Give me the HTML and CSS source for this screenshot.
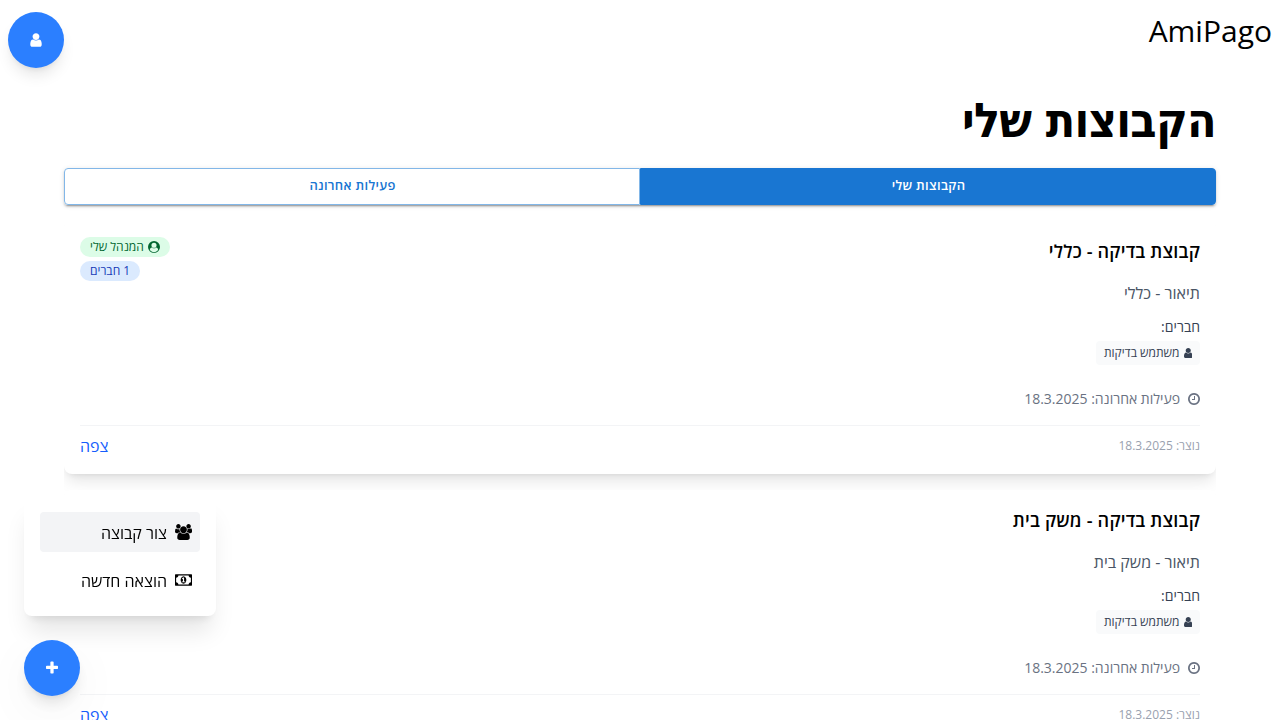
FILE: index.html
```html
<!DOCTYPE html>
<html lang="he" dir="rtl">
<head>
<meta charset="utf-8">
<title>AmiPago</title>
<link rel="stylesheet" href="styles.css">
</head>
<body>
<svg class="sprite" aria-hidden="true">
  <symbol id="user" viewBox="0 0 1280 1792"><path transform="translate(-256 0)" d="M1536 1399q0 109-62.5 187t-150.5 78h-854q-88 0-150.5-78t-62.5-187q0-85 8.5-160.5t31.5-152 58.5-131 94-89 134.5-34.5q131 128 313 128t313-128q76 0 134.5 34.5t94 89 58.5 131 31.5 152 8.5 160.5zm-256-887q0 159-112.5 271.5t-271.5 112.5-271.5-112.5-112.5-271.5 112.5-271.5 271.5-112.5 271.5 112.5 112.5 271.5z"/></symbol>
  <symbol id="users" viewBox="64 0 1920 1792"><path d="M657 896q-162 5-265 128h-134q-82 0-138-40.5t-56-118.5q0-353 124-353 6 0 43.5 21t97.5 42.5 119 21.5q67 0 133-23-5 37-5 66 0 159 90 296zm1071 637q0 120-73 189.5t-194 69.5h-874q-121 0-194-69.5t-73-189.5q0-53 3.5-103.5t14-109 26.5-108.5 43-97.5 62-81 85.5-53.5 111.5-20q10 0 43 21.5t73 48 107 48 135 21.5 135-21.5 107-48 73-48 43-21.5q61 0 111.5 20t85.5 53.5 62 81 43 97.5 26.5 108.5 14 109 3.5 103.5zm-1024-1277q0 106-75 181t-181 75-181-75-75-181 75-181 181-75 181 75 75 181zm704 384q0 159-112.5 271.5t-271.5 112.5-271.5-112.5-112.5-271.5 112.5-271.5 271.5-112.5 271.5 112.5 112.5 271.5zm576 225q0 78-56 118.5t-138 40.5h-134q-103-123-265-128 90-137 90-296 0-29-5-66 66 23 133 23 59 0 119-21.5t97.5-42.5 43.5-21q124 0 124 353zm-128-609q0 106-75 181t-181 75-181-75-75-181 75-181 181-75 181 75 75 181z"/></symbol>
  <symbol id="clock" viewBox="128 0 1536 1792"><path d="M1024 544v448q0 14-9 23t-23 9h-320q-14 0-23-9t-9-23v-64q0-14 9-23t23-9h224v-352q0-14 9-23t23-9h64q14 0 23 9t9 23zm416 352q0-148-73-273t-198-198-273-73-273 73-198 198-73 273 73 273 198 198 273 73 273-73 198-198 73-273zm224 0q0 209-103 385.5t-279.5 279.5-385.5 103-385.5-103-279.5-279.5-103-385.5 103-385.5 279.5-279.5 385.5-103 385.5 103 279.5 279.5 103 385.5z"/></symbol>
  <symbol id="money" viewBox="0 0 1920 1792"><path d="M768 1152h384v-96h-128v-448h-114l-148 137 77 80q42-37 55-57h2v288h-128v96zm512-256q0 70-21 142t-59.5 134-101.5 101-138 39-138-39-101.5-101-59.5-134-21-142 21-142 59.5-134 101.5-101 138-39 138 39 101.5 101 59.5 134 21 142zm512 256v-512q-106 0-181-75t-75-181h-1152q0 106-75 181t-181 75v512q106 0 181 75t75 181h1152q0-106 75-181t181-75zm128-832v1152q0 26-19 45t-45 19h-1792q-26 0-45-19t-19-45v-1152q0-26 19-45t45-19h1792q26 0 45 19t19 45z"/></symbol>
  <symbol id="plus" viewBox="192 0 1408 1792"><path d="M1600 736v192q0 40-28 68t-68 28h-416v416q0 40-28 68t-68 28h-192q-40 0-68-28t-28-68v-416h-416q-40 0-68-28t-28-68v-192q0-40 28-68t68-28h416v-416q0-40 28-68t68-28h192q40 0 68 28t28 68v416h416q40 0 68 28t28 68z"/></symbol>
  <symbol id="circle-user" viewBox="0 0 1792 1792"><path fill-rule="evenodd" d="M896 0a896 896 0 1 1 0 1792a896 896 0 1 1 0-1792zM1515 1351C1490 1135 1406 960 1211 960Q1085 1088 896 1088T581 960C386 960 302 1135 277 1351C413 1545 640 1664 896 1664S1379 1545 1515 1351zM896 256a384 384 0 1 0 0 768a384 384 0 1 0 0-768z"/></symbol>
</svg>

<header class="topbar">
  <div class="brand">AmiPago</div>
  <button class="fab"><svg class="icon icon-user"><use href="#user"/></svg></button>
</header>

<main class="content">
  <h1 class="page-title">הקבוצות שלי</h1>
  <div class="tabs">
    <button class="tab tab-active">הקבוצות שלי</button>
    <button class="tab">פעילות אחרונה</button>
  </div>

  <div class="groups">
    <article class="card">
      <div class="card-head">
        <h2 class="card-title">קבוצת בדיקה - כללי</h2>
        <div class="badges">
          <span class="badge badge-green"><svg class="icon icon-circle"><use href="#circle-user"/></svg>המנהל שלי</span>
          <span class="badge badge-blue">1 חברים</span>
        </div>
      </div>
      <p class="description">תיאור - כללי</p>
      <div class="members-label">חברים:</div>
      <div class="member"><svg class="icon icon-member"><use href="#user"/></svg>משתמש בדיקות</div>
      <div class="activity"><svg class="icon icon-clock"><use href="#clock"/></svg>פעילות אחרונה: 18.3.2025</div>
      <div class="card-foot"><span class="created">נוצר: 18.3.2025</span><a class="view">צפה</a></div>
    </article>

    <article class="card">
      <div class="card-head">
        <h2 class="card-title">קבוצת בדיקה - משק בית</h2>
      </div>
      <p class="description">תיאור - משק בית</p>
      <div class="members-label">חברים:</div>
      <div class="member"><svg class="icon icon-member"><use href="#user"/></svg>משתמש בדיקות</div>
      <div class="activity"><svg class="icon icon-clock"><use href="#clock"/></svg>פעילות אחרונה: 18.3.2025</div>
      <div class="card-foot"><span class="created">נוצר: 18.3.2025</span><a class="view">צפה</a></div>
    </article>
  </div>
</main>

<nav class="speed-dial">
  <div class="menu">
    <a class="menu-item menu-item-active"><svg class="icon icon-menu"><use href="#users"/></svg><span>צור קבוצה</span></a>
    <a class="menu-item"><svg class="icon icon-menu"><use href="#money"/></svg><span>הוצאה חדשה</span></a>
  </div>
  <button class="fab fab-add"><svg class="icon icon-plus"><use href="#plus"/></svg></button>
</nav>
</body>
</html>
```
FILE: styles.css
```css
* { box-sizing: border-box; margin: 0; padding: 0; }
html, body { height: 720px; overflow: hidden; }
body { background: #fff; color: #000; font-family: "Open Sans", sans-serif; font-size: 16px; line-height: 24px; }
button { border: 0; font: inherit; }
.sprite { position: absolute; width: 0; height: 0; }
.icon { display: block; flex: none; fill: currentColor; }
.icon-user { width: 12px; height: 16px; }
.icon-plus { width: 12px; height: 16px; }
.icon-circle { width: 12px; height: 12px; }
.icon-member { width: 8.5px; height: 12px; }
.icon-clock { width: 12px; height: 14px; }
.icon-menu { width: 17px; height: 16px; }

.topbar { display: flex; justify-content: space-between; padding: 12px 8px 0; height: 80px; }
.brand { padding-top: 1px; font-size: 30px; line-height: 36px; }
.fab { display: flex; align-items: center; justify-content: center; width: 56px; height: 56px; border-radius: 50%; background: #2b7fff; color: #fff; box-shadow: 0 10px 15px -3px rgba(0,0,0,.1), 0 4px 6px -4px rgba(0,0,0,.1); }
.fab-add { box-shadow: 0 10px 15px -3px rgba(0,0,0,.1), 0 4px 6px -4px rgba(0,0,0,.1), 0 16px 50px rgba(0,0,0,.05); }

.content { padding: 16px 64px 0; }
.page-title { font-family: "DejaVu Sans Condensed", "DejaVu Sans", sans-serif; font-stretch: condensed; font-size: 48px; line-height: 48px; font-weight: 700; letter-spacing: -.7px; height: 72px; }
.tabs { display: flex; height: 37px; border-radius: 4px; box-shadow: 0 3px 1px -2px rgba(0,0,0,.2), 0 2px 2px rgba(0,0,0,.14), 0 1px 5px rgba(0,0,0,.12); }
.tab { flex: 1; border: 1px solid #82b7e8; border-radius: 4px 0 0 4px; background: #fff; color: #1976d2; font-size: 13px; line-height: 23px; font-weight: 600; letter-spacing: .3px; padding: 0 0 2px 1px; }
.tab-active { border-color: #1976d2; border-radius: 0 4px 4px 0; background: #1976d2; color: #fff; }

.groups { margin-top: 16px; display: flex; flex-direction: column; gap: 16px; height: 499px; overflow: hidden; }
.card { flex: none; height: 253px; padding: 16px; border-radius: 8px; background: #fff; box-shadow: 0 10px 15px -3px rgba(0,0,0,.1), 0 4px 6px -4px rgba(0,0,0,.1); }
.card-head { display: flex; justify-content: space-between; height: 44px; }
.card-title { font-size: 18px; line-height: 28px; font-weight: 600; letter-spacing: .2px; }
.badges { display: flex; flex-direction: column; align-items: flex-end; gap: 4px; }
.badge { display: flex; align-items: center; gap: 4px; height: 20px; padding: 0 10px; border-radius: 10px; font-size: 12px; line-height: 16px; }
.badge-green { background: #dcfce7; color: #016630; }
.badge-blue { background: #dbeafe; color: #193cb8; }
.description { color: #4a5565; }
.members-label { margin-top: 12px; font-size: 14px; line-height: 20px; color: #364153; }
.member { display: flex; align-items: center; gap: 4px; width: fit-content; height: 24px; margin-top: 4px; padding: 4px 8px; border-radius: 4px; background: #f9fafb; color: #364153; font-size: 12px; line-height: 16px; }
.activity { display: flex; align-items: center; gap: 8px; margin-top: 24px; font-size: 14px; line-height: 20px; color: #6a7282; }
.card-foot { display: flex; justify-content: space-between; align-items: center; margin-top: 16px; padding-top: 8px; border-top: 1px solid #f3f4f6; }
.created { font-size: 12px; line-height: 16px; color: #99a1af; }
.view { color: #155dfc; }

.speed-dial { position: fixed; left: 24px; bottom: 24px; display: flex; flex-direction: column; align-items: flex-end; gap: 24px; }
.menu { display: flex; flex-direction: column; gap: 8px; width: 192px; height: 120px; padding: 16px; border-radius: 8px; background: #fff; box-shadow: 0 20px 25px -5px rgba(0,0,0,.1), 0 8px 10px -6px rgba(0,0,0,.1); }
.menu-item { display: flex; align-items: center; gap: 8px; height: 40px; padding: 8px; border-radius: 4px; }
.menu-item span { padding-top: 2px; }
.menu-item-active { background: #f3f4f6; }
```
